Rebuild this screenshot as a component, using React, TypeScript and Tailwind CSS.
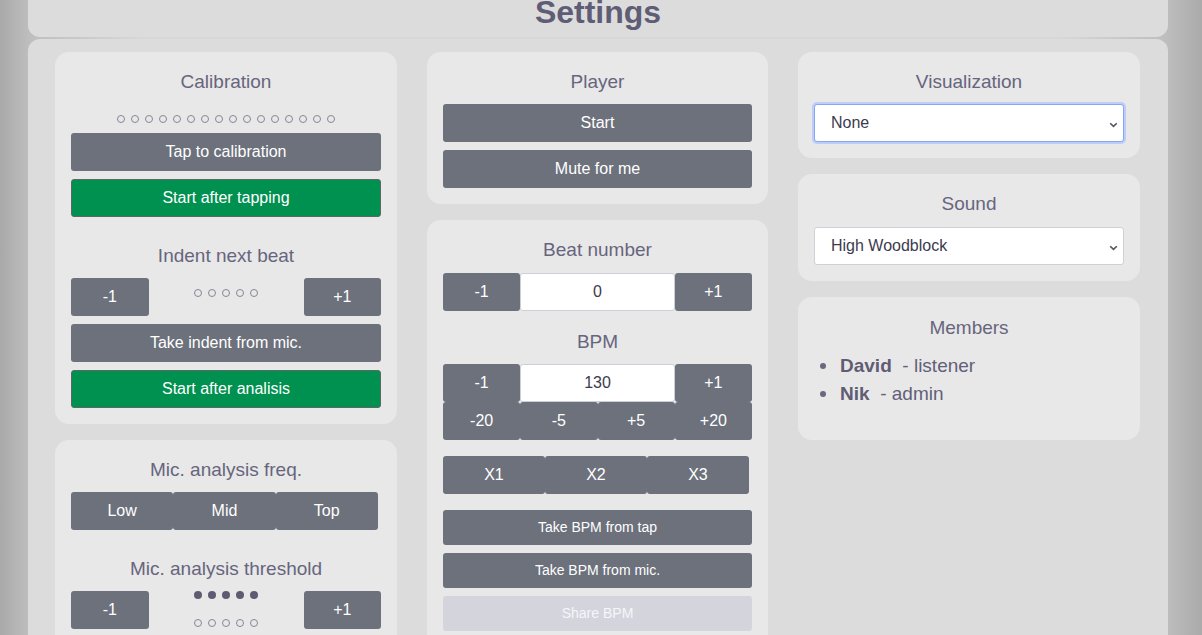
import React from "react";

const F = "font-['Liberation_Sans',Arial,sans-serif]";

function Title({ children, className = "" }: { children: React.ReactNode; className?: string }) {
  return (
    <div className={`text-center text-[19px] leading-[23px] text-[#67657d] mb-[11px] ${className}`}>{children}</div>
  );
}

function Btn({
  children,
  className = "",
  variant = "gray",
}: {
  children: React.ReactNode;
  className?: string;
  variant?: "gray" | "green" | "disabled";
}) {
  const v =
    variant === "green"
      ? "bg-[#00904f] border border-[#5a6962] text-white"
      : variant === "disabled"
      ? "bg-[#d4d4dc] text-[#f6f6fa]"
      : "bg-[#6c717c] text-white";
  return (
    <button
      className={`flex items-center justify-center rounded-[3px] text-[16px] ${v} ${className}`}
    >
      {children}
    </button>
  );
}

function Hollow({ n }: { n: number }) {
  return (
    <div className="flex gap-[6px]">
      {Array.from({ length: n }).map((_, i) => (
        <span key={i} className="block w-[8px] h-[8px] rounded-full border border-[#8c8497]" />
      ))}
    </div>
  );
}

function Filled({ n }: { n: number }) {
  return (
    <div className="flex gap-[6px]">
      {Array.from({ length: n }).map((_, i) => (
        <span key={i} className="block w-[8px] h-[8px] rounded-full bg-[#5e5c70]" />
      ))}
    </div>
  );
}

function Card({ children, className = "" }: { children: React.ReactNode; className?: string }) {
  return <div className={`bg-[#e8e8e8] rounded-[14px] px-4 pt-[18px] pb-4 ${className}`}>{children}</div>;
}

function Input({ value, className = "" }: { value: string; className?: string }) {
  return (
    <div
      className={`flex items-center justify-center h-[38px] bg-white border border-[#cdcfd8] rounded-[3px] text-[16px] text-[#3c3b4e] ${className}`}
    >
      {value}
    </div>
  );
}

function Select({ value, focused }: { value: string; focused?: boolean }) {
  return (
    <div
      className={`relative flex items-center h-[38px] bg-white rounded-[3px] border pl-4 text-[16px] text-[#3c3b4e] ${
        focused ? "border-[#8aa5f2] shadow-[0_0_0_2px_#bccdf9]" : "border-[#cfd0d8]"
      }`}
    >
      {value}
      <svg className="absolute right-[5px] top-[17px]" width="9" height="6" viewBox="0 0 9 6">
        <path d="M1.2 1.2 L4.5 4.4 L7.8 1.2" fill="none" stroke="#55545f" strokeWidth="1.6" />
      </svg>
    </div>
  );
}

export default function App() {
  return (
    <div
      className={`h-screen w-full overflow-hidden bg-[linear-gradient(to_right,#a9a9a9,#bebebe_2.4%,#d8d8d8_12%,#d8d8d8_88%,#bebebe_97%,#aaaaaa)] ${F}`}
    >
      <div className="ml-[28px] w-[1140px]">
        <header className="-mt-[6px] bg-[#dcdcdc] rounded-b-[12px] pb-[6px] text-center">
          <h1 className="text-[32px] leading-[37px] font-bold text-[#5f5c76]">Settings</h1>
        </header>
        <main className="mt-[2px] bg-[#dcdcdc] rounded-t-[12px] px-[27px] pt-[13px] pb-4 grid grid-cols-[342px_341px_342px] gap-x-[30px] items-start">
          {/* Column 1 */}
          <div className="flex flex-col gap-4">
            <Card>
              <Title>Calibration</Title>
              <div className="h-[29px] flex items-center justify-center">
                <Hollow n={16} />
              </div>
              <Btn className="w-full h-[38px]">Tap to calibration</Btn>
              <Btn variant="green" className="w-full h-[38px] mt-2">
                Start after tapping
              </Btn>
              <Title className="mt-[27px]">Indent next beat</Title>
              <div className="flex h-[38px]">
                <Btn className="w-1/4 h-full">-1</Btn>
                <div className="w-1/2 flex justify-center pt-[11px]">
                  <Hollow n={5} />
                </div>
                <Btn className="w-1/4 h-full">+1</Btn>
              </div>
              <Btn className="w-full h-[38px] mt-2">Take indent from mic.</Btn>
              <Btn variant="green" className="w-full h-[38px] mt-2">
                Start after analisis
              </Btn>
            </Card>
            <Card>
              <Title>Mic. analysis freq.</Title>
              <div className="flex h-[38px]">
                <Btn className="w-[33%] h-full">Low</Btn>
                <Btn className="w-[33%] h-full">Mid</Btn>
                <Btn className="w-[33%] h-full">Top</Btn>
              </div>
              <Title className="mt-[27px]">Mic. analysis threshold</Title>
              <div className="flex h-[38px]">
                <Btn className="w-1/4 h-full">-1</Btn>
                <div className="w-1/2 flex flex-col items-center">
                  <Filled n={5} />
                  <div className="mt-[20px]">
                    <Hollow n={5} />
                  </div>
                </div>
                <Btn className="w-1/4 h-full">+1</Btn>
              </div>
              <div className="h-[40px]" />
            </Card>
          </div>

          {/* Column 2 */}
          <div className="flex flex-col gap-4">
            <Card>
              <Title>Player</Title>
              <Btn className="w-full h-[38px]">Start</Btn>
              <Btn className="w-full h-[38px] mt-2">Mute for me</Btn>
            </Card>
            <Card>
              <Title className="!mb-3">Beat number</Title>
              <div className="flex h-[38px]">
                <Btn className="w-1/4 h-full">-1</Btn>
                <Input value="0" className="w-1/2" />
                <Btn className="w-1/4 h-full">+1</Btn>
              </div>
              <Title className="mt-[19px]">BPM</Title>
              <div className="flex h-[38px]">
                <Btn className="w-1/4 h-full">-1</Btn>
                <Input value="130" className="w-1/2" />
                <Btn className="w-1/4 h-full">+1</Btn>
              </div>
              <div className="flex h-[38px]">
                <Btn className="w-1/4 h-full">-20</Btn>
                <Btn className="w-1/4 h-full">-5</Btn>
                <Btn className="w-1/4 h-full">+5</Btn>
                <Btn className="w-1/4 h-full">+20</Btn>
              </div>
              <div className="flex h-[38px] mt-4">
                <Btn className="w-[33%] h-full">X1</Btn>
                <Btn className="w-[33%] h-full">X2</Btn>
                <Btn className="w-[33%] h-full">X3</Btn>
              </div>
              <Btn className="w-full h-[35px] mt-4 !text-[14px]">Take BPM from tap</Btn>
              <Btn className="w-full h-[35px] mt-2 !text-[14px]">Take BPM from mic.</Btn>
              <Btn variant="disabled" className="w-full h-[35px] mt-2 !text-[14px]">
                Share BPM
              </Btn>
            </Card>
          </div>

          {/* Column 3 */}
          <div className="flex flex-col gap-4">
            <Card>
              <Title>Visualization</Title>
              <Select value="None" focused />
            </Card>
            <Card>
              <Title className="!mb-3">Sound</Title>
              <Select value="High Woodblock" />
            </Card>
            <Card className="!pb-8 !pt-[19px]">
              <Title className="!mb-0">Members</Title>
              <ul className="mt-[13px] text-[19px] leading-[28px] text-[#625f78]">
                <li className="flex items-center">
                  <span className="block w-[6px] h-[6px] rounded-full bg-[#6a6780] ml-[6px] mr-[14px]" />
                  <b className="font-bold text-[#5f5c74]">David</b>
                  <span className="whitespace-pre">{"  - listener"}</span>
                </li>
                <li className="flex items-center">
                  <span className="block w-[6px] h-[6px] rounded-full bg-[#6a6780] ml-[6px] mr-[14px]" />
                  <b className="font-bold text-[#5f5c74]">Nik</b>
                  <span className="whitespace-pre">{"  - admin"}</span>
                </li>
              </ul>
            </Card>
          </div>
        </main>
      </div>
    </div>
  );
}
